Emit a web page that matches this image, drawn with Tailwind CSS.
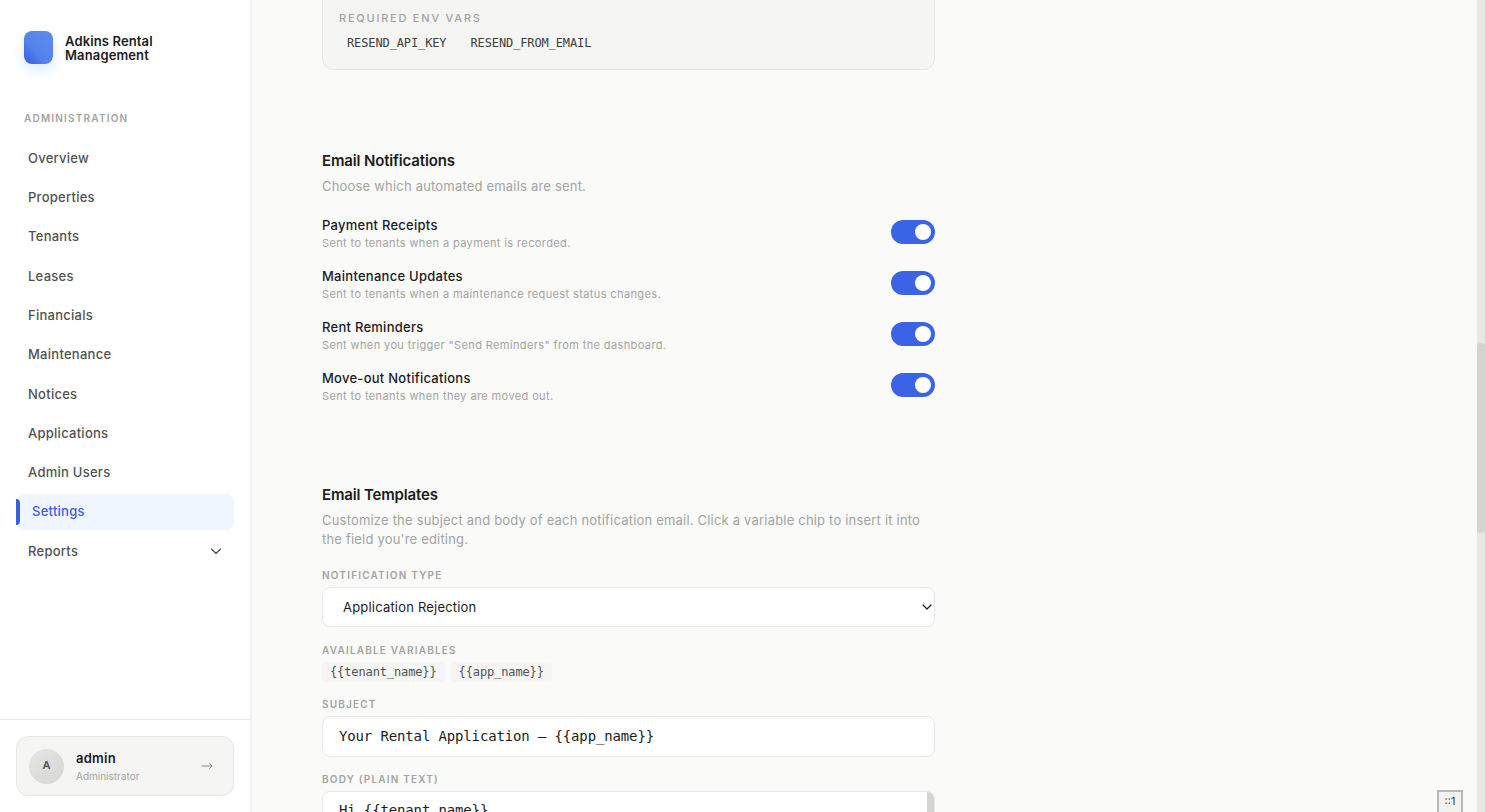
<!DOCTYPE html>
<html lang="en">
<head>
    <meta charset="UTF-8">
    <meta name="viewport" content="width=device-width, initial-scale=1.0">
    <title>Settings - Adkins Rental Management</title>
    <script src="https://cdn.jsdelivr.net/npm/@tailwindcss/browser@4"></script>
</head>
<body class="flex h-screen overflow-hidden bg-[#fafaf9] font-['Inter','Liberation_Sans',sans-serif] text-sm text-[#1c1c1c]">

    <!-- Sidebar -->
    <aside class="flex w-[252px] shrink-0 flex-col border-r-2 border-[#f2f2f1] bg-white">
        <a href="#" class="flex items-center gap-3 px-6 pt-[31px]">
            <span class="h-[33px] w-[29px] rounded-lg bg-linear-to-tr from-[#335ae0] via-[#5583ec] via-40% to-[#5b8aef] shadow-[0_6px_14px_#dbeafe]"></span>
            <span class="w-28 text-[13px] leading-[14px] font-semibold tracking-[0.01em]">Adkins Rental Management</span>
        </a>
        <h2 class="mt-12 px-6 text-[10px] leading-3 font-semibold tracking-[0.12em] text-[#a3a3a0] uppercase">Administration</h2>
        <nav class="mt-4 flex h-[429px] flex-col justify-between px-4 text-[13px] font-medium tracking-[0.02em] text-[#525252]">
            <a href="#" class="flex h-9 items-center rounded-lg px-3">Overview</a>
            <a href="#" class="flex h-9 items-center rounded-lg px-3">Properties</a>
            <a href="#" class="flex h-9 items-center rounded-lg px-3">Tenants</a>
            <a href="#" class="flex h-9 items-center rounded-lg px-3">Leases</a>
            <a href="#" class="flex h-9 items-center rounded-lg px-3">Financials</a>
            <a href="#" class="flex h-9 items-center rounded-lg px-3">Maintenance</a>
            <a href="#" class="flex h-9 items-center rounded-lg px-3">Notices</a>
            <a href="#" class="flex h-9 items-center rounded-lg px-3">Applications</a>
            <a href="#" class="flex h-9 items-center rounded-lg px-3">Admin Users</a>
            <a href="#" aria-current="page" class="flex h-9 items-center gap-3 rounded-lg bg-[#eff6ff] text-[#3b5fe2]">
                <span class="h-[26px] w-1 rounded-r-sm bg-[#3b5fe2]"></span>Settings
            </a>
            <button type="button" class="flex h-9 items-center justify-between rounded-lg px-3">
                Reports
                <svg class="h-3 w-3" viewBox="0 0 12 12" fill="none" stroke="currentColor" stroke-width="1.2" stroke-linecap="round" stroke-linejoin="round"><path d="M1.500 4l4.500 4.500 4.500-4.500"/></svg>
            </button>
        </nav>
        <div class="mt-auto border-t border-[#e7e7e5] p-4">
            <button type="button" class="flex h-[60px] w-full items-center gap-3 rounded-xl border border-[#e7e7e5] bg-[#f5f5f4] px-3 text-left">
                <span class="flex h-[35px] w-[35px] items-center justify-center rounded-full bg-linear-to-br from-[#e5e5e3] to-[#d6d6d4] text-[11px] font-semibold text-[#525252]">A</span>
                <span class="flex-1">
                    <span class="block text-[13px] leading-4 font-semibold tracking-[0.02em]">admin</span>
                    <span class="mt-1 block text-[10px] leading-3 text-[#a3a3a0]">Administrator</span>
                </span>
                <svg class="mr-2 h-3 w-3" viewBox="0 0 12 12" fill="none" stroke="#8a8a88" stroke-width="1" stroke-linecap="round" stroke-linejoin="round"><path d="M1 6h10M8.500 3.500L11 6l-2.500 2.500"/></svg>
            </button>
        </div>
    </aside>

    <!-- Page content -->
    <main class="min-w-0 flex-1 overflow-hidden px-[70px]">
        <div class="max-w-[613px]">
            <div class="rounded-b-xl border border-t-0 border-[#e7e7e5] bg-[#f5f5f4] px-4 pt-2.5 pb-4">
                <p class="text-[11px] leading-4 font-medium tracking-[0.16em] text-[#a3a3a0] uppercase">Required env vars</p>
                <div class="mt-[7px] flex gap-2 text-xs leading-5 tracking-[-0.01em] text-[#404040]">
                    <code class="px-2 font-['DejaVu_Sans_Mono',monospace]">RESEND_API_KEY</code>
                    <code class="px-2 font-['DejaVu_Sans_Mono',monospace]">RESEND_FROM_EMAIL</code>
                </div>
            </div>

            <section class="mt-[81px]">
                <h2 class="text-[15px] leading-5 font-semibold tracking-[-0.01em]">Email Notifications</h2>
                <p class="mt-1.5 text-[13px] leading-[19px] tracking-[0.015em] text-[#a3a3a0]">Choose which automated emails are sent.</p>
                <div class="mt-5 flex flex-col gap-4">
                    <label class="flex items-start justify-between">
                        <span>
                            <span class="block text-[13px] leading-[19px] font-medium tracking-[0.02em]">Payment Receipts</span>
                            <span class="block text-[11px] leading-4 tracking-[0.035em] text-[#a3a3a0]">Sent to tenants when a payment is recorded.</span>
                        </span>
                        <input type="checkbox" checked class="mt-1 flex h-6 w-11 appearance-none items-center rounded-full bg-[#d4d4d2] px-1 before:h-4 before:w-4 before:rounded-full before:bg-white checked:justify-end checked:bg-[#3b63e6]">
                    </label>
                    <label class="flex items-start justify-between">
                        <span>
                            <span class="block text-[13px] leading-[19px] font-medium tracking-[0.02em]">Maintenance Updates</span>
                            <span class="block text-[11px] leading-4 tracking-[0.035em] text-[#a3a3a0]">Sent to tenants when a maintenance request status changes.</span>
                        </span>
                        <input type="checkbox" checked class="mt-1 flex h-6 w-11 appearance-none items-center rounded-full bg-[#d4d4d2] px-1 before:h-4 before:w-4 before:rounded-full before:bg-white checked:justify-end checked:bg-[#3b63e6]">
                    </label>
                    <label class="flex items-start justify-between">
                        <span>
                            <span class="block text-[13px] leading-[19px] font-medium tracking-[0.02em]">Rent Reminders</span>
                            <span class="block text-[11px] leading-4 tracking-[0.035em] text-[#a3a3a0]">Sent when you trigger "Send Reminders" from the dashboard.</span>
                        </span>
                        <input type="checkbox" checked class="mt-1 flex h-6 w-11 appearance-none items-center rounded-full bg-[#d4d4d2] px-1 before:h-4 before:w-4 before:rounded-full before:bg-white checked:justify-end checked:bg-[#3b63e6]">
                    </label>
                    <label class="flex items-start justify-between">
                        <span>
                            <span class="block text-[13px] leading-[19px] font-medium tracking-[0.02em]">Move-out Notifications</span>
                            <span class="block text-[11px] leading-4 tracking-[0.035em] text-[#a3a3a0]">Sent to tenants when they are moved out.</span>
                        </span>
                        <input type="checkbox" checked class="mt-1 flex h-6 w-11 appearance-none items-center rounded-full bg-[#d4d4d2] px-1 before:h-4 before:w-4 before:rounded-full before:bg-white checked:justify-end checked:bg-[#3b63e6]">
                    </label>
                </div>
            </section>

            <section class="mt-[81px]">
                <h2 class="text-[15px] leading-5 font-semibold tracking-[-0.01em]">Email Templates</h2>
                <p class="mt-1.5 text-[13px] leading-[19px] tracking-[0.015em] text-[#a3a3a0]">Customize the subject and body of each notification email. Click a variable chip to insert it into the field you're editing.</p>

                <label for="type" class="mt-5 block text-[10px] leading-3 font-semibold tracking-[0.12em] text-[#a3a3a0] uppercase">Notification type</label>
                <div class="relative mt-1.5">
                    <select id="type" class="h-10 w-full appearance-none rounded-lg border border-[#e7e7e5] bg-white px-5 text-[13px] tracking-[0.015em]">
                        <option>Application Rejection</option>
                        <option>Payment Receipts</option>
                        <option>Maintenance Updates</option>
                        <option>Rent Reminders</option>
                    </select>
                    <svg class="pointer-events-none absolute top-3.5 right-0.5 h-3 w-3" viewBox="0 0 12 12" fill="none" stroke="#1c1c1c" stroke-width="1.2" stroke-linecap="round" stroke-linejoin="round"><path d="M2 4l4 4 4-4"/></svg>
                </div>

                <p class="mt-[17px] text-[10px] leading-3 font-semibold tracking-[0.12em] text-[#a3a3a0] uppercase">Available variables</p>
                <div class="mt-1.5 flex gap-1.5 font-['DejaVu_Sans_Mono',monospace] text-xs leading-5 text-[#525252]">
                    <button type="button" class="rounded-sm bg-[#f5f5f4] px-2 tracking-[-0.01em]">{{tenant_name}}</button>
                    <button type="button" class="rounded-sm bg-[#f5f5f4] px-2 tracking-[-0.01em]">{{app_name}}</button>
                </div>

                <label for="subject" class="mt-4 block text-[10px] leading-3 font-semibold tracking-[0.12em] text-[#a3a3a0] uppercase">Subject</label>
                <input id="subject" type="text" value="Your Rental Application — {{app_name}}" class="mt-1.5 block w-full rounded-lg border border-[#e7e7e5] bg-white px-4 py-0 font-['DejaVu_Sans_Mono',monospace] text-sm leading-[39px] tracking-[-0.01em]">

                <label for="body" class="mt-4 block text-[10px] leading-3 font-semibold tracking-[0.12em] text-[#a3a3a0] uppercase">Body (plain text)</label>
                <div class="relative mt-1.5 overflow-hidden rounded-lg border border-[#e7e7e5] bg-white">
                    <textarea id="body" rows="10" class="block w-full resize-none overflow-hidden px-4 py-1.5 font-['DejaVu_Sans_Mono',monospace] text-sm leading-6 tracking-[-0.01em]">Hi {{tenant_name}},</textarea>
                    <span class="absolute top-0 right-0 h-24 w-[7px] bg-[#d4d4d2]"></span>
                </div>
            </section>
        </div>
    </main>

    <!-- Scrollbar -->
    <div class="w-2 shrink-0 bg-[#e7e7e5] pt-[343px]">
        <div class="h-[190px] rounded-sm bg-[#d4d4d2]"></div>
    </div>

    <div class="fixed right-[22px] bottom-0 h-[22px] w-[26px] border-2 border-b-0 border-[#b8b8b6] bg-[#f2f2f1] text-center text-[11px] leading-[19px] text-[#404040]">::1</div>
</body>
</html>
